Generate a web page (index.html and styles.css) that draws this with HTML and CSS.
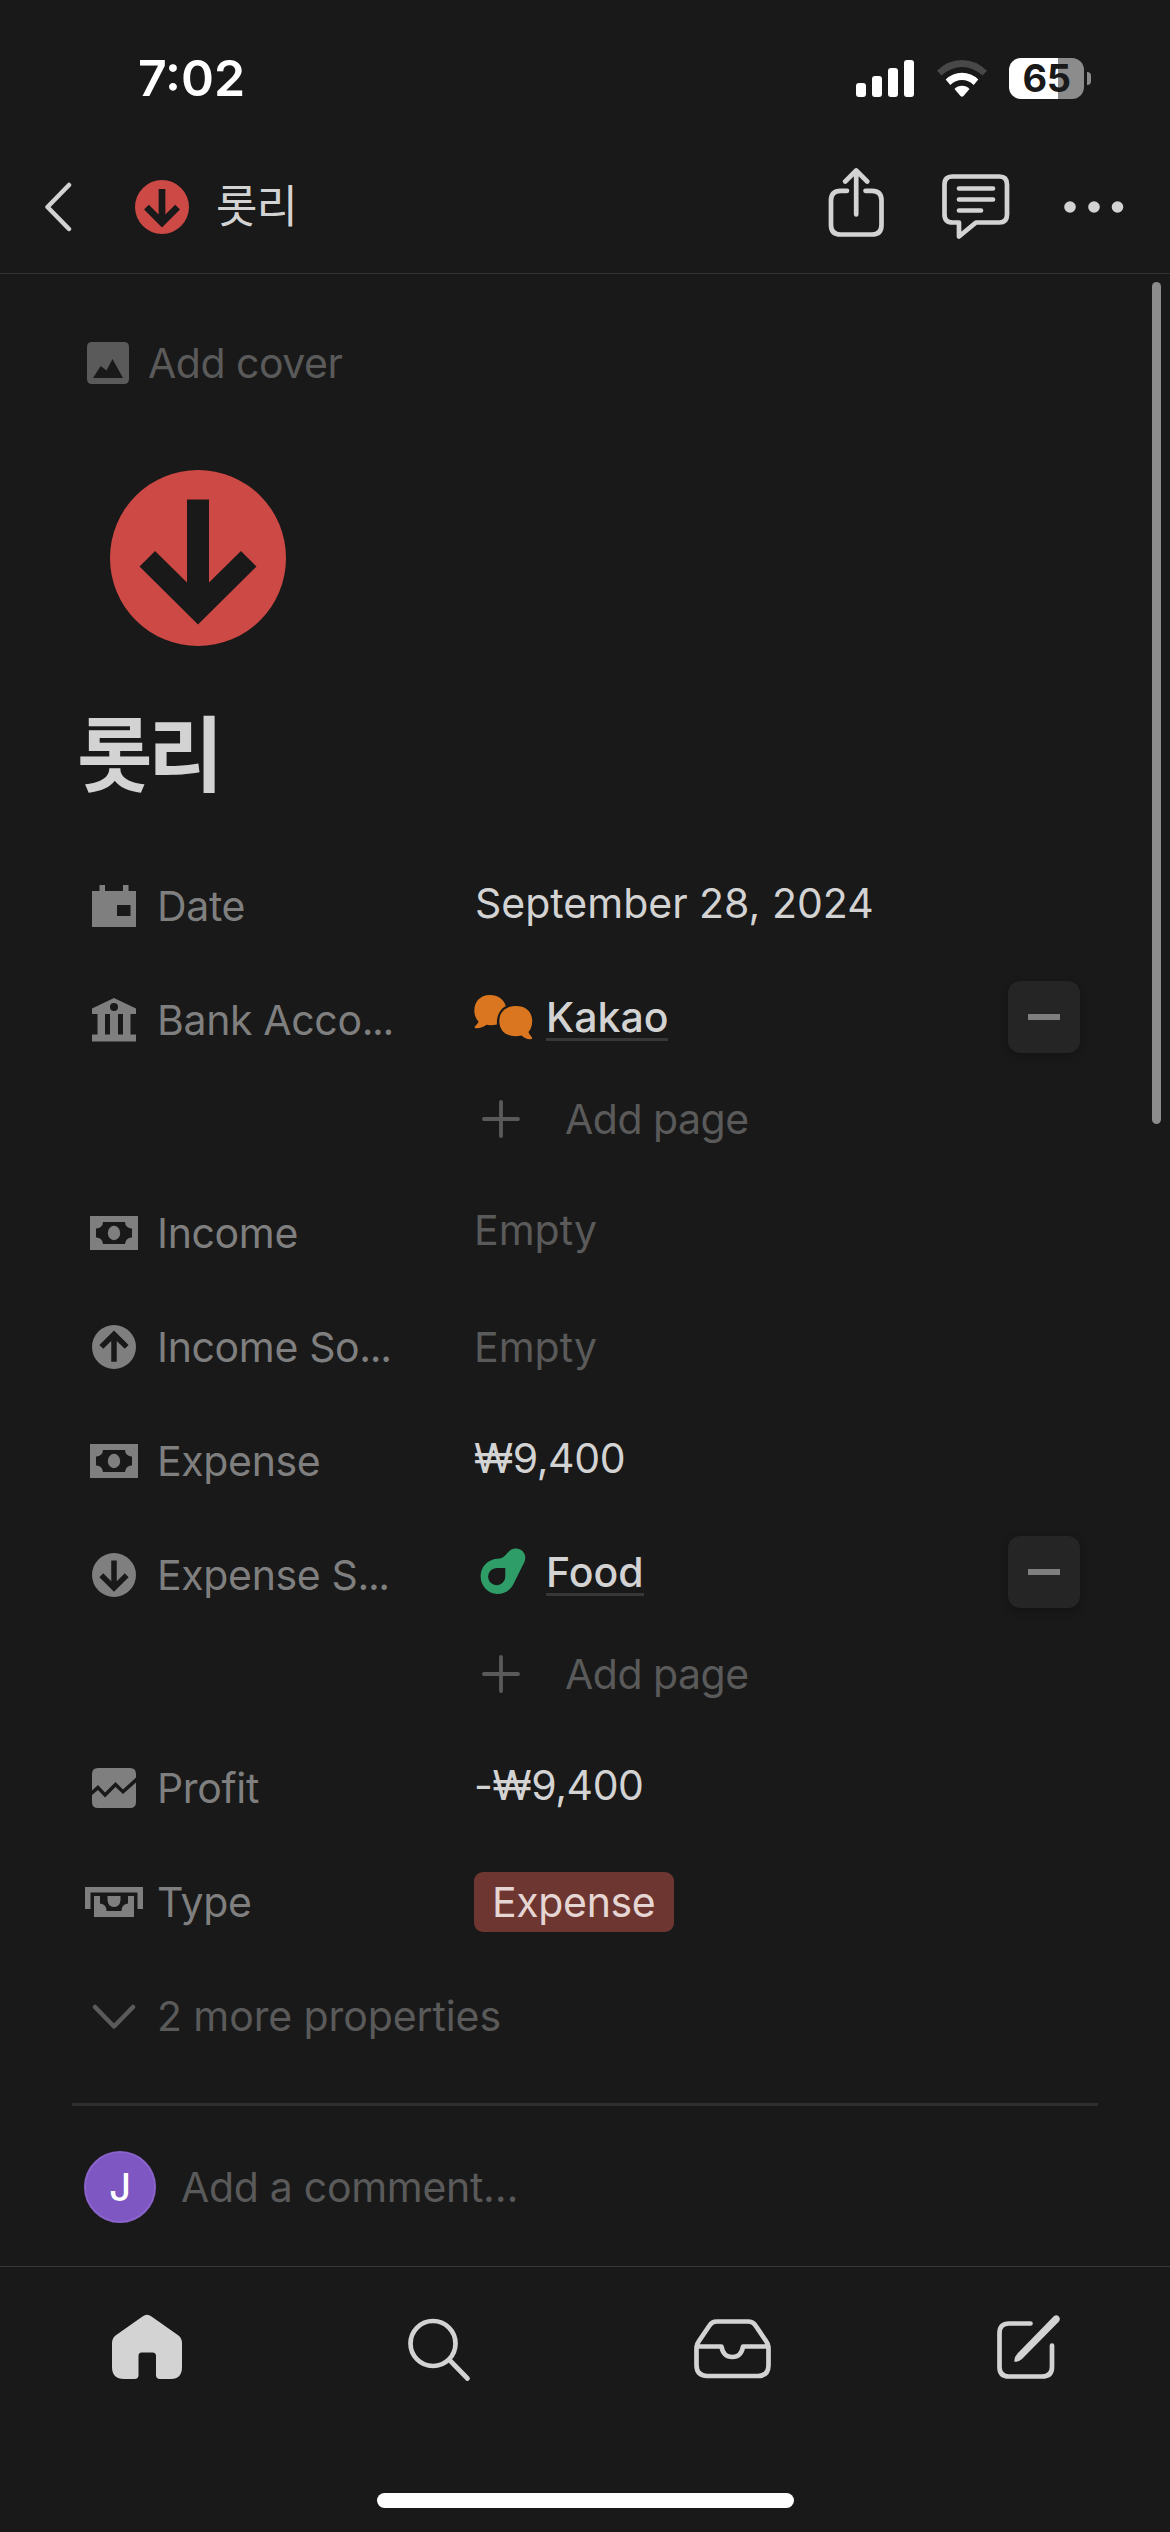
FILE: index.html
```html
<!DOCTYPE html>
<html lang="en">
<head>
<meta charset="utf-8">
<title>롯리</title>
<link rel="stylesheet" href="styles.css">
</head>
<body>
<svg class="defs" aria-hidden="true">
  <defs>
    <symbol id="arrow-disc" viewBox="0 0 176 176">
      <path fill="currentColor" fill-rule="evenodd" d="M88 0a88 88 0 1 1 0 176a88 88 0 1 1 0-176zM77 29.500V112.500L45 81L29.500 96.500L88 154.500L146.500 96.500L131 81L99 112.500V29.500z"/>
    </symbol>
    <symbol id="cash" viewBox="0 0 48 34">
      <path fill="currentColor" fill-rule="evenodd" d="M0 0H48V34H0zM13 6A6.500 6.500 0 0 1 6 12.500V21.500A6.500 6.500 0 0 1 13 28H35A6.500 6.500 0 0 1 42 21.500V12.500A6.500 6.500 0 0 1 35 6z"/>
      <ellipse cx="24" cy="17" rx="6.200" ry="7.200" fill="currentColor"/>
    </symbol>
  </defs>
</svg>
<div class="screen">
  <div class="status">
    <div class="time">7:02</div>
    <div class="indicators">
      <svg class="signal" viewBox="0 0 58 37" fill="#fff"><rect y="23" width="10" height="14" rx="3"/><rect x="16" y="16" width="10" height="21" rx="3"/><rect x="32" y="8" width="10" height="29" rx="3"/><rect x="48" width="10" height="37" rx="3"/></svg>
      <svg class="wifi" viewBox="0 0 50 37">
        <path fill="#484848" d="M0 10.700Q11 0 25 0T50 10.700L45.500 15.500Q36 7 25 7T4.500 15.500z"/>
        <path fill="#fff" d="M8.700 19.500Q15.500 12.700 25 12.700T41.300 19.500L36.700 25Q31.500 20 25 20T13.300 25z"/>
        <path fill="#fff" d="M17.500 29Q20.500 25.700 25 25.700T32.500 29L26.500 36Q25 37.600 23.500 36z"/>
      </svg>
      <div class="battery"><span>65</span></div>
      <div class="nub"></div>
    </div>
  </div>

  <header class="topbar">
    <svg class="back" viewBox="0 0 28 50"><path d="M25 3L3.500 25L25 47"/></svg>
    <svg class="mini-disc red"><use href="#arrow-disc"/></svg>
    <div class="page-name">롯리</div>
    <div class="actions">
      <svg class="share line-icon" viewBox="0 0 58 70"><path d="M19 22.800H12.500Q3 22.800 3 32.300V57Q3 66.500 12.500 66.500H44Q53.500 66.500 53.500 57V32.300Q53.500 22.800 44 22.800H37.500M28.200 46.500V3M17.200 13.500L28.200 2.500L39.200 13.500"/></svg>
      <svg class="talk line-icon" viewBox="0 0 68 66"><path d="M10.500 2.500H57.500Q65 2.500 65 10.500V40.500Q65 48.500 57.500 48.500H34L17 62.500V48.500H10.500Q2.500 48.500 2.500 40.500V10.500Q2.500 2.500 10.500 2.500zM17 14.500H51M17 25.500H51M17 36.500H39"/></svg>
      <svg class="dots" viewBox="0 0 60 12"><circle cx="6" cy="6" r="5.800"/><circle cx="30" cy="6" r="5.800"/><circle cx="53.500" cy="6" r="5.800"/></svg>
    </div>
  </header>

  <main class="content">
    <div class="scrollbar"></div>
    <div class="cover">
      <svg viewBox="0 0 42 42"><path fill="currentColor" fill-rule="evenodd" d="M5 0H37Q42 0 42 5V37Q42 42 37 42H5Q0 42 0 37V5Q0 0 5 0zM6 36H36L25.500 17L19.500 28.500L13.700 24z"/></svg>
      <span>Add cover</span>
    </div>
    <svg class="page-icon red"><use href="#arrow-disc"/></svg>
    <h1>롯리</h1>

    <div class="props">
      <div class="row">
        <div class="icon"><svg width="44" height="42" viewBox="0 0 44 42"><path fill="currentColor" fill-rule="evenodd" d="M0 6H7.500V0H13V6H31V0H36.500V6H44V42H0zM25 20V31H38.500V20z"/></svg></div>
        <div class="label">Date</div>
        <div class="value up"><span class="date">September 28, 2024</span></div>
      </div>
      <div class="row tall">
        <div class="icon"><svg width="44" height="44" viewBox="0 0 44 44"><path fill="currentColor" fill-rule="evenodd" d="M22 0L44 10.500V16H38.500V36.500H44V43.500H0V36.500H5.500V16H0V10.500zM13 16V36.500H18V16zM26 16V36.500H31V16zM22 5a4 4 0 1 0 0 8a4 4 0 1 0 0-8z"/></svg></div>
        <div class="label cut">Bank Acco<span>...</span></div>
        <div class="value up">
          <svg class="rel-icon" viewBox="0 0 60 48"><path fill="#d9761f" d="M16 2C24 2 30 6.500 31.800 13C25 17 22.300 24 23 31.500C19 32.500 15 32.500 12.500 31.800C9 34.500 4 36 1 35C-0.500 33.500 3.500 32 4.500 28.500C-3 21 -1 2 16 2z"/><path fill="#d9761f" d="M42 13C52 13 58.200 19 58.200 28C58.200 32.500 57 36 54.500 39C55.500 42.500 58.200 43.500 58.200 45.500C56 47.500 51 45.800 47.500 42.500C33 45.500 25.300 38 25.300 28C25.300 19 32 13 42 13z"/></svg>
          <span class="link">Kakao</span>
          <div class="minus"></div>
        </div>
        <div class="add"><svg viewBox="0 0 38 38"><path d="M19 2V36M2 19H36"/></svg><span>Add page</span></div>
      </div>
      <div class="row">
        <div class="icon"><svg width="48" height="34"><use href="#cash"/></svg></div>
        <div class="label">Income</div>
        <div class="value up empty"><span>Empty</span></div>
      </div>
      <div class="row">
        <div class="icon"><svg class="flip" width="44" height="44"><use href="#arrow-disc"/></svg></div>
        <div class="label cut">Income So<span>...</span></div>
        <div class="value empty"><span>Empty</span></div>
      </div>
      <div class="row">
        <div class="icon"><svg width="48" height="34"><use href="#cash"/></svg></div>
        <div class="label">Expense</div>
        <div class="value up"><span class="money">₩9,400</span></div>
      </div>
      <div class="row tall">
        <div class="icon"><svg width="44" height="44"><use href="#arrow-disc"/></svg></div>
        <div class="label cut">Expense S<span>...</span></div>
        <div class="value up">
          <svg class="rel-icon" viewBox="0 0 60 48"><path fill="#2f9d68" fill-rule="evenodd" d="M36 2.500C44 -3 54 4 50.600 13.500L39.500 36C36 43 30 46 23 46A17.700 17.700 0 0 1 23 10.700C31 10.500 31 6.500 36 2.500zM22.700 20A8.600 8.600 0 1 0 31.300 28.500V20z"/></svg>
          <span class="link">Food</span>
          <div class="minus"></div>
        </div>
        <div class="add"><svg viewBox="0 0 38 38"><path d="M19 2V36M2 19H36"/></svg><span>Add page</span></div>
      </div>
      <div class="row">
        <div class="icon"><svg width="44" height="40" viewBox="0 0 44 40"><path fill="currentColor" d="M6 0H38Q44 0 44 6V9.500L31 21.500L23.500 14L13 24.500L6 17L0 22.500V6Q0 0 6 0zM0 27L6 22L13 29.500L23.500 19L31 26L44 14.500V34Q44 40 38 40H6Q0 40 0 34z"/></svg></div>
        <div class="label">Profit</div>
        <div class="value up"><span class="money">-₩9,400</span></div>
      </div>
      <div class="row">
        <div class="icon"><svg width="58" height="30" viewBox="0 0 58 30"><path fill="currentColor" d="M0 0H58V22H52.500V5.500H5.500V22H0zM9 9H15V16.500Q21.500 17 21.500 24H36.500Q36.500 17 43 16.500V9H49V30H9zM22.500 9H35.500V13Q35 20 29 20T22.500 13z"/></svg></div>
        <div class="label">Type</div>
        <div class="value"><span class="tag">Expense</span></div>
      </div>
      <div class="row more">
        <div class="icon"><svg width="44" height="26" viewBox="0 0 44 26"><path class="chev" d="M3 4L22 23.500L41 4"/></svg></div>
        <div class="label">2 more properties</div>
      </div>
    </div>

    <div class="comment">
      <div class="avatar">J</div>
      <span>Add a comment…</span>
    </div>
  </main>

  <nav class="tabs">
    <svg class="tab" viewBox="0 0 80 80"><path fill="#d3d3d3" d="M35.500 6.500Q40 3 44.500 6.500L71.500 25.500Q75 28.500 75 33V57Q75 69 64 69H53Q49 69 49 65V46Q49 42.500 45.500 42.500H34.500Q31.500 42.500 31.500 46V65Q31.500 69 27.500 69H17Q5 69 5 57V33Q5 28.500 8.500 25.500z"/></svg>
    <svg class="tab line-icon" viewBox="0 0 80 80"><circle cx="34" cy="33.500" r="22.500"/><path d="M50.500 50L68.500 68.500"/></svg>
    <svg class="tab inbox line-icon" viewBox="0 0 80 80"><path d="M24.500 11.500H56Q61 11.500 63.500 15.500L74 31Q76.500 34 76.500 38V55Q76.500 66 66 66H15Q4.500 66 4.500 55V38Q4.500 34 7 31L17.500 15.500Q20 11.500 24.500 11.500zM4.500 36.500H29.500C30.500 43 33.500 47 40.300 47S50 43 51 36.500H76.500"/></svg>
    <svg class="tab compose line-icon" viewBox="0 0 80 80"><path d="M38.500 13.500H17Q7.500 13.500 7.500 23V57Q7.500 66.500 17 66.500H50Q60 66.500 60 57V35.500"/><path fill="#d3d3d3" stroke="none" d="M61.500 6.500Q64.500 3.800 66.800 6.500T66.500 12L30 49Q26 52.500 22.300 51.500Q22 47 25.500 43.500z"/></svg>
  </nav>
  <div class="home-indicator"></div>
</div>
</body>
</html>
```
FILE: styles.css
```css
* { box-sizing: border-box; }
body {
  margin: 0;
  background: #191919;
  color: #d3d3d3;
  font-family: Inter, "Noto Sans CJK KR", sans-serif;
  font-size: 41px;
  line-height: 60px;
}
svg { display: block; flex: none; }
span { white-space: nowrap; }
.defs { position: absolute; width: 0; height: 0; }
.screen { width: 1170px; height: 2532px; display: flex; flex-direction: column; overflow: hidden; }

.status { height: 140px; flex: none; display: flex; justify-content: space-between; padding: 48px 79px 0 138px; color: #fff; }
.time { font-size: 50px; font-weight: 600; letter-spacing: 0; }
.indicators { display: flex; align-items: center; height: 60px; }
.signal { width: 58px; height: 37px; }
.wifi { width: 50px; height: 37px; margin-left: 23px; }
.battery {
  width: 75px; height: 41px; margin-left: 22px; border-radius: 12px;
  background: linear-gradient(90deg, #fff 49px, #8c8c8c 49px);
  color: #191919; font-size: 38px; font-weight: 650; line-height: 41px; letter-spacing: -0.5px; text-align: center;
}
.nub { width: 4px; height: 13px; margin-left: 3px; background: #8c8c8c; border-radius: 0 5px 5px 0; }

.topbar { height: 134px; flex: none; border-bottom: 1px solid #303030; display: flex; align-items: center; padding: 0 46px 0 44px; }
.back { width: 28px; height: 50px; fill: none; stroke: #d3d3d3; stroke-width: 4.5; stroke-linecap: round; stroke-linejoin: round; }
.red { color: #cd4945; }
.mini-disc { width: 54px; height: 54px; margin-left: 63px; }
.page-name { margin-left: 27px; font-size: 45px; letter-spacing: -1px; }
.actions { margin-left: auto; display: flex; align-items: center; }
.line-icon { fill: none; stroke: #d3d3d3; stroke-width: 4.7; stroke-linecap: round; stroke-linejoin: round; }
.share { width: 58px; height: 70px; margin-top: -8px; }
.talk { width: 68px; height: 66px; margin-left: 56px; }
.dots { width: 60px; height: 12px; margin-left: 54px; fill: #d3d3d3; }

.content { height: 1992px; flex: none; position: relative; padding: 59px 72px 0; }
.scrollbar { position: absolute; right: 9px; top: 8px; width: 9px; height: 842px; border-radius: 5px; background: #8c8c8c; }
.cover { display: flex; align-items: center; height: 60px; padding-left: 15px; color: #5a5a5a; letter-spacing: -0.5px; }
.cover svg { width: 42px; height: 42px; margin-right: 19px; }
.page-icon { width: 176px; height: 176px; margin: 77px 0 0 38px; }
h1 { margin: 60px 0 0 5px; font-size: 82px; line-height: 100px; font-weight: 700; letter-spacing: -4.5px; }

.props { margin-top: 43px; }
.row { display: grid; grid-template-columns: 84px 318px 1fr; grid-template-rows: 114px; align-items: center; }
.tall { grid-template-rows: 114px 99px; }
.icon { color: #7f7f7f; display: flex; justify-content: center; }
.flip { transform: scaleY(-1); }
.label { color: #7f7f7f; padding-left: 1px; letter-spacing: -0.35px; }
.cut span { letter-spacing: -1.4px; }
.value { display: flex; align-items: center; }
.up { padding-bottom: 6px; }
.empty { color: #5a5a5a; }
.date { padding-left: 1px; }
.money { letter-spacing: -0.4px; }
.rel-icon { width: 60px; height: 48px; margin-right: 12px; }
.link { font-weight: 500; line-height: 48px; height: 48px; border-bottom: 3px solid #373737; }
.minus { width: 72px; height: 72px; margin-left: auto; margin-right: 18px; border-radius: 12px; background: #252525; box-shadow: 0 3px 9px rgba(0,0,0,.25); display: flex; align-items: center; justify-content: center; }
.minus::before { content: ""; width: 32px; height: 6px; background: #7f7f7f; }
.add { grid-column: 3; display: flex; align-items: center; color: #5a5a5a; padding: 0 0 15px 8px; letter-spacing: -0.5px; }
.add svg { width: 38px; height: 38px; margin-right: 45px; fill: none; stroke: #5a5a5a; stroke-width: 3.8; stroke-linecap: round; }
.tag { height: 60px; padding: 0 19px 0 18px; border-radius: 9px; background: #6e3630; color: #e5d5d3; letter-spacing: -0.35px; }
.more .label { white-space: nowrap; color: #5a5a5a; letter-spacing: -0.1px; }
.chev { fill: none; stroke: #5a5a5a; stroke-width: 4.5; stroke-linecap: round; stroke-linejoin: round; }

.comment { margin-top: 30px; border-top: 3px solid #2f2f2f; padding: 45px 0 0 12px; display: flex; align-items: center; color: #5a5a5a; letter-spacing: -0.3px; }
.avatar { width: 72px; height: 72px; margin-right: 25px; border-radius: 50%; border: 2px solid #8a63cb; background: #7e57c2; color: #fff; font-size: 38px; font-weight: 500; line-height: 68px; text-align: center; }

.tabs { height: 227px; flex: none; border-top: 1px solid #393939; display: flex; gap: 212px; padding: 43px 0 0 107px; }
.tab { width: 80px; height: 80px; }
.inbox { margin-left: 1px; }
.compose { margin-left: 8px; }
.home-indicator { width: 417px; height: 15px; flex: none; margin-left: 377px; border-radius: 8px; background: #fff; }
```
